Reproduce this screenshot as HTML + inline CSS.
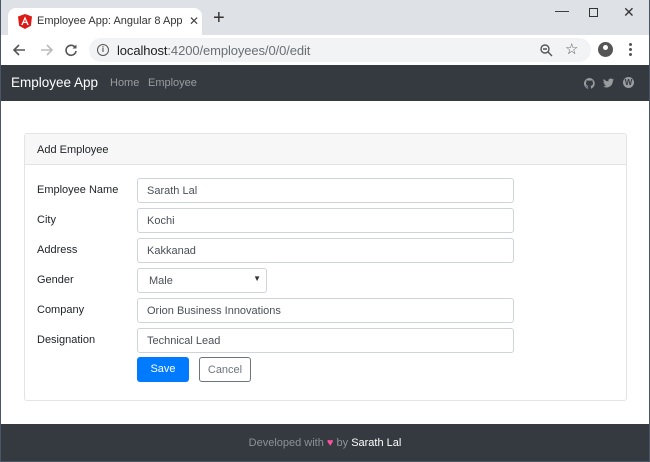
<!DOCTYPE html>
<html><head><meta charset="utf-8"><style>
*{box-sizing:border-box;margin:0;padding:0}
body{width:650px;height:462px;overflow:hidden;position:relative;font-family:"Liberation Sans",sans-serif;background:#fff}
.frame{position:absolute;inset:0;border:1px solid #4a5566;border-top:none}
.tabbar{position:absolute;left:0;top:0;width:650px;height:35px;background:#dee1e6}
.tab{position:absolute;left:8px;top:8px;width:194px;height:27px;background:#fff;border-radius:8px 8px 0 0;font-size:11px;color:#333}
.tab .t{position:absolute;left:29px;top:7px;white-space:nowrap;width:146px;overflow:hidden}
.tab .x{position:absolute;left:181px;top:6px;font-size:12px;color:#444}
.plus{position:absolute;left:213px;top:7px;font-size:20px;color:#333}
.win{position:absolute;top:5px;font-size:14px;color:#333}
.toolbar{position:absolute;left:0;top:35px;width:650px;height:30px;background:#fff}
.url{position:absolute;left:89px;top:3px;width:502px;height:24px;background:#f1f3f4;border-radius:12px}
.url .u{position:absolute;left:28px;top:5px;font-size:13px;color:#202124;letter-spacing:-0.1px}
.url .u span{color:#6b6f74}
.nav{position:absolute;left:1px;top:65px;width:648px;height:36px;background:#343a40}
.brand{position:absolute;left:10px;top:10px;color:#fff;font-size:13.5px}
.nl{position:absolute;top:12px;color:#9a9da0;font-size:11px}
.card{position:absolute;left:24px;top:133px;width:603px;height:268px;border:1px solid #e4e4e4;border-radius:3px}
.ch{height:31px;background:#f7f7f7;border-bottom:1px solid #e4e4e4;font-size:11px;color:#212529;padding:10px 12px}
.lbl{position:absolute;left:37px;font-size:11px;color:#212529}
.in{position:absolute;left:137px;width:377px;height:25px;border:1px solid #ced4da;border-radius:3px;font-size:11px;color:#495057;padding:6px 9px}
.btn{position:absolute;top:357px;height:25px;border-radius:3px;font-size:11px;text-align:center;padding-top:6px}
.foot{position:absolute;left:1px;top:424px;width:648px;height:38px;background:#343a40;text-align:center;font-size:11px;color:#8e9297;padding-top:13px}
</style></head><body>
<div class="tabbar">
 <div class="tab">
  <svg style="position:absolute;left:10px;top:6px" width="14" height="15" viewBox="0 0 14 15"><path d="M7 0L0 2.5 1.1 11.8 7 15 12.9 11.8 14 2.5Z" fill="#dd1b16"/><path d="M7 2.5L3.2 11h1.5l.8-2h3l.8 2h1.5Z M6 7.7L7 5.2 8 7.7Z" fill="#fff"/></svg>
  <div class="t">Employee App: Angular 8 App wi</div><div class="x">✕</div>
 </div>
 <div class="plus">+</div>
 <div class="win" style="left:555px;top:2px">—</div>
 <div style="position:absolute;left:589px;top:8px;width:9px;height:9px;border:1px solid #333"></div>
 <div class="win" style="left:623px;top:4px">✕</div>
</div>
<div class="toolbar">
 <svg style="position:absolute;left:12px;top:8px" width="14" height="14" viewBox="0 0 14 14"><path d="M13 7H2M7 2L2 7l5 5" stroke="#555" stroke-width="1.6" fill="none"/></svg>
 <svg style="position:absolute;left:40px;top:8px" width="14" height="14" viewBox="0 0 14 14"><path d="M1 7h11M7 2l5 5-5 5" stroke="#bbb" stroke-width="1.6" fill="none"/></svg>
 <svg style="position:absolute;left:64px;top:8px" width="14" height="14" viewBox="0 0 14 14"><path d="M11.5 5A5 5 0 1 0 12 8" stroke="#555" stroke-width="1.6" fill="none"/><path d="M12.5 1.5v4h-4" fill="#555"/></svg>
 <div class="url">
  <div style="position:absolute;left:8px;top:6px;width:12px;height:12px;border:1.5px solid #555;border-radius:50%;font-size:8px;text-align:center;line-height:9px;font-weight:bold;color:#555">i</div>
  <div class="u">localhost<span>:4200/employees/0/0/edit</span></div>
  <svg style="position:absolute;left:451px;top:6px" width="13" height="13" viewBox="0 0 13 13"><circle cx="5" cy="5" r="4" stroke="#555" stroke-width="1.4" fill="none"/><path d="M8 8l4 4M3 5h4" stroke="#555" stroke-width="1.4"/></svg>
  <div style="position:absolute;left:476px;top:2px;font-size:15px;color:#555">☆</div>
 </div>
 <div style="position:absolute;left:598px;top:7px;width:15px;height:15px;border-radius:50%;background:#555"></div>
 <div style="position:absolute;left:603px;top:10px;width:5px;height:5px;border-radius:50%;background:#fff"></div>
 <div style="position:absolute;left:629px;top:8px;width:3px;font-size:0">
  <div style="width:3px;height:3px;background:#555;border-radius:50%;margin-bottom:2px"></div><div style="width:3px;height:3px;background:#555;border-radius:50%;margin-bottom:2px"></div><div style="width:3px;height:3px;background:#555;border-radius:50%"></div></div>
</div>
<div class="nav">
 <div class="brand">Employee App</div>
 <div class="nl" style="left:109px">Home</div>
 <div class="nl" style="left:147px">Employee</div>
 <svg style="position:absolute;left:583px;top:13px" width="11" height="11" viewBox="0 0 16 16"><path fill="#9a9da0" d="M8 0a8 8 0 0 0-2.5 15.6c.4 0 .5-.2.5-.4v-1.5c-2.2.5-2.7-1-2.7-1-.4-.9-.9-1.2-.9-1.2-.7-.5.1-.5.1-.5.8.1 1.2.8 1.2.8.7 1.3 1.9.9 2.3.7.1-.5.3-.9.5-1.1-1.8-.2-3.6-.9-3.6-4 0-.9.3-1.6.8-2.1-.1-.2-.4-1 .1-2.1 0 0 .7-.2 2.2.8a7.5 7.5 0 0 1 4 0c1.5-1 2.2-.8 2.2-.8.4 1.1.2 1.9.1 2.1.5.6.8 1.3.8 2.1 0 3.1-1.9 3.7-3.6 3.9.3.3.5.8.5 1.5v2.2c0 .2.1.5.6.4A8 8 0 0 0 8 0z"/></svg>
 <svg style="position:absolute;left:602px;top:13px" width="11" height="10" viewBox="0 0 16 13"><path fill="#9a9da0" d="M16 1.5a6.6 6.6 0 0 1-1.9.5A3.3 3.3 0 0 0 15.6.2a6.6 6.6 0 0 1-2.1.8 3.3 3.3 0 0 0-5.6 3A9.3 9.3 0 0 1 1.1.6a3.3 3.3 0 0 0 1 4.4 3.3 3.3 0 0 1-1.5-.4 3.3 3.3 0 0 0 2.6 3.2 3.3 3.3 0 0 1-1.5.1 3.3 3.3 0 0 0 3.1 2.3A6.6 6.6 0 0 1 0 11.5 9.3 9.3 0 0 0 5 13c6 0 9.3-5 9.3-9.3v-.4A6.7 6.7 0 0 0 16 1.5z"/></svg>
 <div style="position:absolute;left:622px;top:12px;width:11px;height:11px;border-radius:50%;background:#9a9da0;color:#343a40;font-size:8px;font-weight:bold;text-align:center;line-height:11px">W</div>
</div>
<div class="card"><div class="ch">Add Employee</div></div>
<div class="lbl" style="top:184px">Employee Name</div><div class="in" style="top:178px">Sarath Lal</div>
<div class="lbl" style="top:214px">City</div><div class="in" style="top:208px">Kochi</div>
<div class="lbl" style="top:244px">Address</div><div class="in" style="top:238px">Kakkanad</div>
<div class="lbl" style="top:274px">Gender</div><div class="in" style="top:268px;width:130px;padding-left:11px">Male<span style="position:absolute;right:5px;top:5px;font-size:8px;color:#333">▼</span></div>
<div class="lbl" style="top:304px">Company</div><div class="in" style="top:298px">Orion Business Innovations</div>
<div class="lbl" style="top:334px">Designation</div><div class="in" style="top:328px">Technical Lead</div>
<div class="btn" style="left:137px;width:52px;background:#007bff;color:#fff">Save</div>
<div class="btn" style="left:199px;width:52px;border:1px solid #6c757d;color:#6c757d">Cancel</div>
<div class="foot">Developed with <span style="color:#ff4fa0">♥</span> by <span style="color:#fff">Sarath Lal</span></div>
<div class="frame"></div>
</body></html>
